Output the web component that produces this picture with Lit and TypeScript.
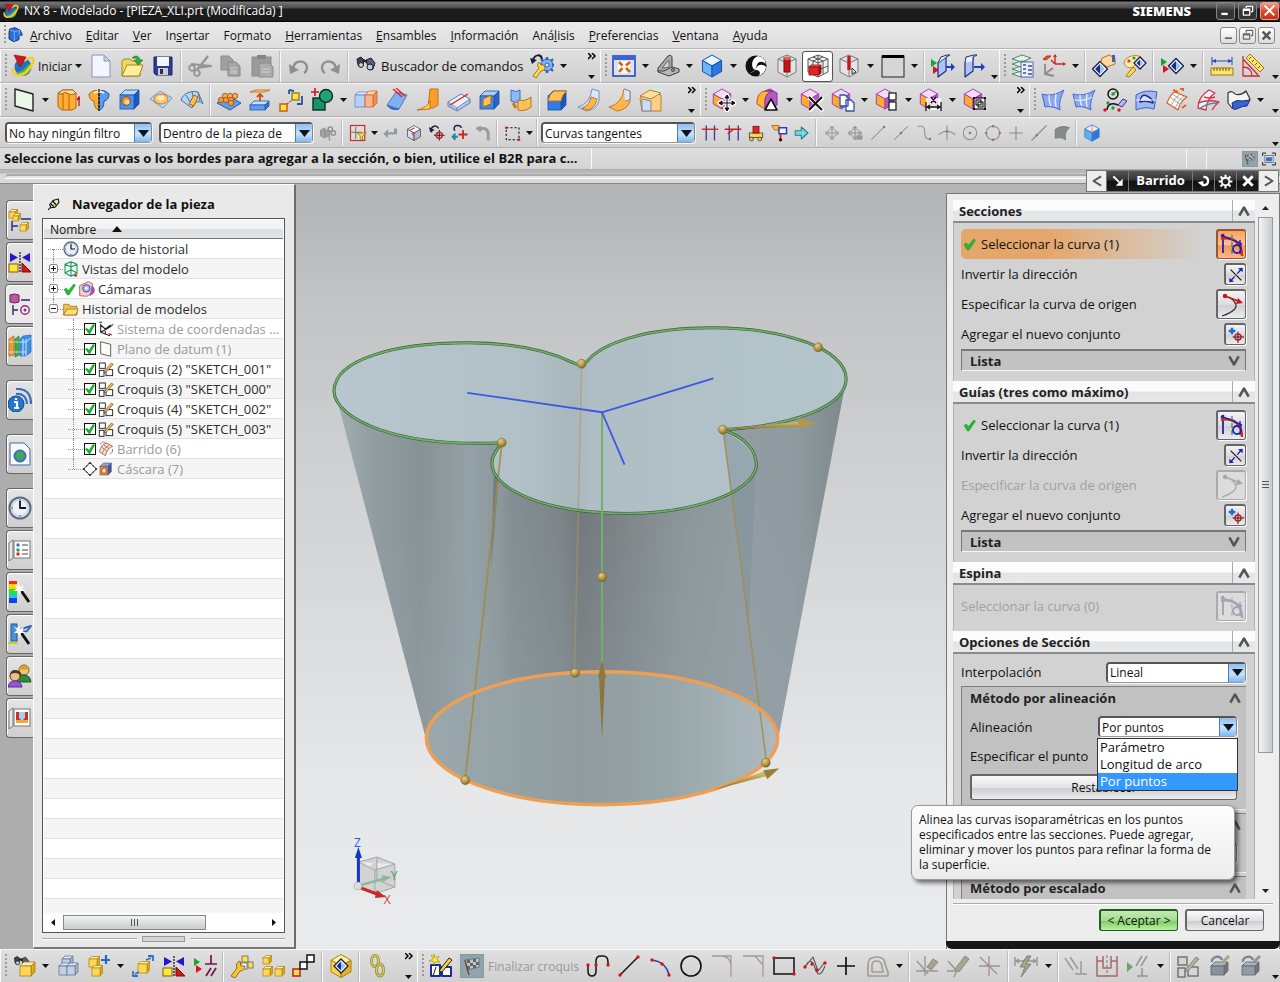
import { LitElement, html, css, svg, nothing } from "lit";
import { customElement, property } from "lit/decorators.js";
import { unsafeSVG } from "lit/directives/unsafe-svg.js";
import { classMap } from "lit/directives/class-map.js";

/* ---------- drawing helpers for the icon set (24 x 24 grid) ---------- */
const p = (d: string, f = "none", s = "none", w = 1) =>
  `<path d="${d}" fill="${f}" stroke="${s}" stroke-width="${w}" stroke-linejoin="round"/>`;
const c = (x: number, y: number, r: number, f = "none", s = "none", w = 1) =>
  `<circle cx="${x}" cy="${y}" r="${r}" fill="${f}" stroke="${s}" stroke-width="${w}"/>`;
const r = (x: number, y: number, w: number, h: number, f = "none", s = "none", k = 1) =>
  `<rect x="${x}" y="${y}" width="${w}" height="${h}" fill="${f}" stroke="${s}" stroke-width="${k}"/>`;
const cube = (x: number, y: number, a: number, top: string, left: string, right: string, st: string, w = 1) => {
  const h = a / 2, k = a * 0.87;
  return p(`M${x} ${y - a}L${x + k} ${y - h}L${x} ${y}L${x - k} ${y - h}Z`, top, st, w) +
    p(`M${x - k} ${y - h}L${x} ${y}V${y + a}L${x - k} ${y + h}Z`, left, st, w) +
    p(`M${x + k} ${y - h}L${x} ${y}V${y + a}L${x + k} ${y + h}Z`, right, st, w);
};
const box = (x: number, y: number, w: number, h: number, d: number, f: string, t: string, s: string, st: string) =>
  p(`M${x} ${y}l${d} ${-d}h${w}l${-d} ${d}Z`, t, st, 0.8) +
  p(`M${x + w} ${y}l${d} ${-d}v${h}l${-d} ${d}Z`, s, st, 0.8) + r(x, y, w, h, f, st, 0.8);
const diamond = (x: number, y: number, a: number) =>
  p(`M${x} ${y - a}L${x + a} ${y}L${x} ${y + a}L${x - a} ${y}Z`, "#fff", "#12205e", 1.4) +
  p(`M${x} ${y - a + 2.5}V${y + a - 2.5}L${x - a + 2.5} ${y}Z`, "#1c2f86") +
  p(`M${x} ${y - a + 2.5}V${y + a - 2.5}L${x + a - 2.5} ${y}Z`, "#9fc3ee");
const tris = (x: number, y: number) =>
  p(`M${x} ${y}l6 4l-6 4Z`, "#1ba234") + p(`M${x + 2} ${y + 7}l6 4l-6 4Z`, "#d81818");
const dots = (col: string, ...pts: number[]) => {
  let o = "";
  for (let i = 0; i < pts.length; i += 2) o += c(pts[i], pts[i + 1], 1.7, col);
  return o;
};
const yb = (x: number, y: number, s = 6) => box(x, y, s, s, 2.5, "#ffd85a", "#fff0b0", "#dba21a", "#b98a18");
const nxc = cube(10, 11, 10, "#f3def6", "#ffac26", "#b256c8", "#a541b4");
const binoc = p("M3 5l4-2l3 3l-1 6a3 3 0 0 1-5-1Z", "#3d4352", "#1c1f28") +
  p("M12 6l5-2l4 5l-2 6a3 3 0 0 1-5-2Z", "#596176", "#1c1f28") + c(7, 11, 2.4, "#cfd9f0", "#222") + c(16, 13, 3, "#b8c7ec", "#222") + p("M9 6l4 2", "none", "#222", 2.5);
const wireCube = p("M12 1l9 4v13l-9 5l-9-5V5ZM3 5l9 4l9-4M12 9v14M12 1v8", "#e4e4e4", "#7a7a7a");
const mirror = p("M2 3l8 4.5L2 12ZM22 3l-8 4.5l8 4.5Z", "#2318c8") + p("M12 2v20", "none", "#111", 1.2).replace("/>", ' stroke-dasharray="2 1"/>') +
  r(1, 14, 9, 8, "#ffe93d", "#8a5800") + p("M14 22V13l9 9Z", "#cf1b12", "#7c0d08");
const flag = r(0, 0, 24, 24, "#8fa4ac", "#7b9199") + p("M5 6l14-2v9l-12 3Z", "#c3c6c6", "#6f7778") +
  p("M7 6h3v3H7ZM13 5h3v3h-3ZM10 9h3v3h-3ZM16 8h3v3h-3ZM7 12h3v3H7ZM13 11h3v3h-3Z", "#5d6668") + p("M5 6l4 15", "none", "#6b4a3e", 1.4);
const surf = p("M1 6C8 8 15 7 23 2C19 10 18 16 19 22C14 19 8 18 4 19Z", "#8da6f2", "#4764cf") +
  p("M8 7c0 5 0 8 2 11M15 6c-1 5-1 9 0 13", "none", "#e6edff", 1.4);
const curveTool = (a: string, b: string, g: string) =>
  p("M3 1v19", "none", a, 1.8) + p("M1 6c8-2 14 0 18 6c2 3 3 7 3 11", "none", b, 2.4) +
  p("M1 2l21 9M20 7v5M4 1l-3 3", "none", a, 1.4) + p("M12 2v21", "none", g, 1.2).replace("/>", ' stroke-dasharray="5 2"/>') +
  c(17, 16, 4, "none", a, 1.8) + p("M21 10l-1 11", "none", a, 1.4);
const sketch = (w: string, k: string, pen: string) => r(2, 3, 9, 8, w, k, 1.4) + r(2, 14, 7, 9, w, k, 1.4) + r(12, 13, 10, 9, w, k, 1.4) +
  p("M10 15L20 3l3 2L13 16l-4 2Z", pen, k, 0.7);
const clock = c(12, 12, 10.5, "#dfeaf8", "#5d6b78", 2) + c(12, 12, 8, "#e9f2fc", "#a9bccc", 0.8) + p("M12 5v7h6", "none", "#111", 1.8) +
  dots("#3c4c60", 12, 4, 12, 20, 4, 12).replace(/r="1.7"/g, 'r=".8"');
const sheet = p("M1 5l4-3v18l-4 3Z", "#e9e9e9", "#777") + r(6, 3, 16, 17, "#fff", "#777");
const wand = p("M12 9l9 13", "none", "#111", 3) + p("M10 3l2 4l4-2l-2 4l4 2l-5 0l-1 4l-2-4l-4 0l3-3l-3-3l4 1Z", "#fff");
const hide = (k: string, y: string) => box(4, 12, 13, 9, 4, k, "#aeb4bb", "#717880", "#5f666d") + p("M5 8C4 2 14 1 15 6", "none", "#7c8792", 2.4) + p("M15 9L22 2", "none", y, 3);
const perSmall = (col: string) => p("M3 12h18M12 3v18M3 12l3-3M3 12l3 3M21 12l-3-3M21 12l-3 3M12 3l-3 3M12 3l3 3M12 21l-3-3M12 21l3-3", "none", col, 1.4) + c(12, 12, 5.5, "none", col, 1.2);

const ICONS: Record<string, string> = {
  nx: `<ellipse cx="12" cy="13" rx="8.5" ry="9" fill="#1d70c4"/>` + p("M6 18c5 0 9-5 13-9c3 5 0 12-6 13c-3 0-5-1-7-4Z", "#4db04a") +
    p("M2 14c-1 9 8 9 14 3c5-5 8-11 5-13c-2-1-6 1-8 3", "none", "#f3cc2e", 2.6) + p("M3 1l12 2l-6 10Z", "#d9141c", "#8c0b10", 0.6),
  part: p("M4 3l8-2l8 4l3 7l-5 1v6l-8 3l-7-4V8Z", "#2a6fdc", "#12357c", 1.4) + p("M4 4l7 3l8-2M11 7v14M19 5l-1 8", "none", "#7fb2f5", 1.4),
  newf: p("M3 1h12l6 6v16H3Z", "#f3f5ff", "#8a90c8") + p("M15 1v6h6Z", "#cdd3f5", "#8a90c8"),
  open: p("M2 22V7l2-2h6l2 2h8v15Z", "#f1d567", "#a88617") + p("M2 22l5-11h16l-4 11Z", "#ffef9e", "#a88617") + p("M12 4c4-4 8-1 8 2h3l-5 5l-4-5h3c0-2-2-2-5-2Z", "#3fa83a", "#22701f", 0.6),
  save: p("M3 3h18v18H5l-2-2Z", "#2d3c96", "#1a2360") + r(6, 3, 12, 9, "#f4f6fb") + r(7, 14, 10, 7, "#c9cdd8") + r(9, 15, 3, 5, "#2a2f48"),
  cut: p("M20 2L9 16M3 10l20 2L9 14", "none", "#949494", 2.2) + c(4, 14, 2.8, "none", "#949494", 1.8) + c(9, 19, 2.8, "none", "#949494", 1.8),
  copy: p("M2 2h8l4 4v10H2Z", "#a0a0a0", "#8a8a8a") + p("M9 8h8l4 4v10H9Z", "#a6a6a6", "#858585") + p("M11 14h7M11 17h7M11 19h7", "none", "#d0d0d0"),
  paste: r(2, 3, 19, 19, "#9a9a9a", "#898989") + r(7, 1, 9, 4, "#858585") + p("M9 9h10l4 4v10H9Z", "#acacac", "#8d8d8d") + p("M12 15h8M12 18h8", "none", "#d8d8d8"),
  undo: p("M6 14C8 5 19 6 20 13c0 3-1 5-3 6", "none", "#8f8f8f", 2.4) + p("M2 10l1 10l9-4Z", "#8f8f8f"),
  redo: p("M18 14C16 5 5 6 4 13c0 3 1 5 3 6", "none", "#8f8f8f", 2.4) + p("M22 10l-1 10l-9-4Z", "#8f8f8f"),
  binoc,
  wrench: c(17, 11, 6, "#7fb0ee", "#2d62b8") + c(17, 11, 2, "#dce9fb", "#2d62b8") + p("M17 3v3M17 16v3M9 11h3M22 11h2M11 5l2 2M21 15l2 2M23 5l-2 2", "none", "#2d62b8", 2.4) +
    p("M3 22l6-8a4 4 0 0 1 0-6l2 3h3l1 3a4 4 0 0 1-4 3l-5 7Z", "#ffd94d", "#a37a0e") + p("M3 6C5 0 11 0 12 5", "none", "#181c3c", 2) + p("M0 4l2 6l5-4Z", "#181c3c"),
  fit: r(1, 2, 22, 20, "#d6e4fb", "#2749b8", 1.6) + r(1, 2, 22, 4, "#3a63d6") + r(6, 7, 12, 12, "#fff") + p("M7 8l3.500 3.500M18 18l-4-4M18 8l-4 3.500M7 18l3.500-4", "none", "#e05d0c", 2.6),
  clip: p("M2 18l11 4l10-4v-3l-10-3l-11 4Z", "#b9b9b9", "#3c3c3c") + p("M2 17V14L12 2q4-2 4 2v9l-8 4Z", "#a9a9a9", "#3c3c3c") + p("M6 14l7-8v7Z", "#dadada", "#666") + c(17, 16, 1.6, "#888", "#444", 0.8),
  bcube: cube(12, 12, 11, "#e6f4ff", "#6cb5ff", "#2a78e4", "#1a4ea8"),
  yin: c(12, 12, 10.5, "#111") + p("M14 2a10 10 0 0 1 8 8c-3-3-8-3-9 1s-3 7-8 8c4 0 6-3 8-6s6-3 9 0a10 10 0 0 1-8 9c4-3 1-6-2-6C7 16 6 5 14 2Z", "#fff"),
  axisA: wireCube + r(9, 4, 6, 14, "#c5161c", "#7c0a0e") + `<ellipse cx="12" cy="4.500" rx="3" ry="1.500" fill="#ee5a5e"/>`,
  axisB: p("M12 1l10 4v13l-10 5l-10-5V5ZM2 5l10 4l10-4M12 9v14M12 1v8M7 3l10 4v13M17 3L7 7v13M2 12l10 4l10-4", "#efefef", "#555") + box(3, 13, 10, 8, 2, "#e02525", "#f06b6b", "#a81010", "#8a0d0d"),
  axisC: wireCube + p("M12 2v14", "none", "#c5161c", 3.4) + p("M15 14l4 4l-4 2Z", "#e6e6e6", "#333"),
  rect: r(1, 2, 22, 21, "#d6d6d6", "#222") + r(1, 1, 22, 3, "#000"),
  slabA: tris(0, 5) + p("M7 9l8-6v14l-8 6Z", "#a9c4f5", "#1d2f7e", 1.2) + p("M7 9l3-6l6-2h3l-4 2", "#e9f0ff", "#1d2f7e") + p("M15 12h5v-3l4 4l-4 4v-3h-5Z", "#1740d0"),
  slabB: p("M3 9l8-6v14l-8 6Z", "#a9c4f5", "#1d2f7e", 1.2) + p("M3 9l1-6l8-2h3l-4 2v4", "#e9f0ff", "#1d2f7e") + p("M12 12h7v-3l4 4l-4 4v-3h-7Z", "#1740d0"),
  layers: p("M1 5l10-4l9 3l-9 4ZM1 10l10-3l8 2l-9 4ZM1 15l10-3l8 2l-9 4ZM1 20l10-3l8 2l-9 4Z", "#e4f3e8", "#4e8c66") + r(10, 8, 12, 15, "#eef0fc", "#5562b8") + p("M12 11h3M12 15h3M12 19h3M17 12h4M17 16h4M17 20h4", "none", "#3749b0", 1.6),
  axes: p("M13 10V1M13 10h10M13 10L9 6", "none", "#d02525", 1.4) + p("M1 5l4-3h4l-5 4Z", "#ea5a28", "#c02a10") + p("M13 0l-2 3h4ZM24 10l-3-2v4Z", "#d02525") + p("M3 10v10l9 2M3 20l8-6", "none", "#8c8c8c", 1.8),
  handD: diamond(8, 15, 7.5) + p("M10 4l7-3l6 3v6l-8 3l-6-5Z", "#ffd99c", "#a9732b") + r(20, 1, 3, 7, "#3c5fc4"),
  palD: p("M1 9C2 2 14-1 19 4c2 4-2 7-7 7c-2 4-9 4-11-2Z", "#ffe9a8", "#b48b2c") + c(6, 7, 1.6, "#d33") + c(11, 4, 1.6, "#2a9d3a") + c(15, 6, 1.6, "#36c") + diamond(17, 9, 6) + p("M3 22l7-9l3 3l-7 7Z", "#ffd94d", "#a37a0e"),
  triD: tris(1, 4) + diamond(16, 12, 7.5),
  ruler: p("M2 7h20M2 3v8M22 3v8", "none", "#2749b8") + p("M2 7l4-2v4ZM22 7l-4-2v4Z", "#2749b8") + r(1, 14, 22, 7, "#ffe36e", "#9d7a10") + p("M4 14v3M7 14v3M10 14v3M13 14v3M16 14v3M19 14v3", "none", "#6f5508"),
  angle: p("M2 2v20h17M2 13c6 0 9 4 9 9M2 5l15 16", "none", "#cb2c2c", 1.3) + p("M5 4l4-4l14 14l-4 4Z", "#ffe36e", "#9d7a10") + p("M10 3l-2 2M13 6l-2 2M16 9l-2 2M19 12l-2 2", "none", "#6f5508"),
  plane: p("M3 1l18 5v17L3 18Z", "#eaf8ec", "#222", 1.4),
  extr: p("M2 5l5-3h10l3 3v15l-4 2H6l-4-3Z", "#ffac35", "#b26208") + p("M2 5c5 3 5-2 9 0s5 2 9 0M7 6v15M13 6v16", "none", "#b26208") + p("M2 5l5-3h10l3 3c-4 2-5 2-9 0s-4 3-9 0Z", "#ffe0a4", "#b26208") + p("M23 18V9l-2 3M23 9l1 3", "none", "#c81414", 1.4),
  revo: p("M2 6q6-6 10-2v18q-5-1-5-9q-5-1-5-7Z", "#ffac35", "#b26208") + p("M22 6q-6-6-10-2v18q5-1 5-9q5-1 5-7Z", "#5b9bf0", "#1f4fa4") + p("M7 5q5-3 10 0", "none", "#fff3c8", 2) + p("M12 1v22", "none", "#111", 1.2).replace("/>", ' stroke-dasharray="3 1"/>'),
  hole: box(2, 7, 14, 14, 5, "#4a93f5", "#b9dcff", "#1e58c4", "#1d4fa8") + c(8, 13, 4.4, "#e8953a", "#8c4d0c") + c(9, 14, 2.5, "#ffd9a0"),
  emboss: p("M1 11l10-8l12 7l-9 10Z", "#c3dbf9", "#6e96cf") + `<ellipse cx="12" cy="11" rx="7" ry="5" fill="#ffc36a" stroke="#c87a1a"/><ellipse cx="12" cy="10" rx="4" ry="2.500" fill="#ffe9b8"/>`,
  dart: p("M1 12C3 5 12 2 18 4l5 12c-4-4-9-3-11 4Z", "#b4d3f7", "#49719f") + p("M6 7l7 12M12 4l3 12M18 4l2 9", "none", "#49719f") + p("M9 16l5-9l4 2l-4 9Z", "#ffbc4e", "#a3660f"),
  pattern: p("M0 15l13 7l11-7l-11-6Z", "#5f9df2", "#2458a8") + [3, 8, 13].map((x) => c(x + 1, 12, 2.7, "#f29a3d", "#9d520b", 0.8) + c(x + 5, 8, 2.7, "#f7ab58", "#9d520b", 0.8)).join("") + c(14, 15, 2.7, "#f29a3d", "#9d520b", 0.8),
  offset: p("M2 4h14l6-2H8Z", "#ffd898", "#c27a18") + p("M12 14V6m-3 3l3-3l3 3", "none", "#d24b0c", 1.8) + box(2, 17, 15, 5, 4, "#5f9df2", "#c4defc", "#2f6fd0", "#2458a8"),
  assoc: r(1, 16, 7, 7, "#ffe14a", "#d4640d", 1.6) + r(13, 5, 7, 7, "#ffe14a", "#8d8410", 1.4) + p("M8 16l5-4", "none", "#c33", 1.2).replace("/>", ' stroke-dasharray="2 1"/>') + p("M10 2l5 1M10 2v4M23 8v8l-5 0", "none", "#2c51a8", 1.8),
  unite: r(3, 10, 12, 12, "#15936a", "#0c2d22", 1.4) + c(16, 8, 6.5, "#22a079", "#0c2d22", 1.4) + p("M5 0v8M1 4h8", "none", "#d01818", 1.6),
  split: box(1, 7, 10, 12, 3, "#b6d3f7", "#dcecfd", "#8fb5ea", "#5c88c8") + box(11, 7, 8, 12, 4, "#f6b488", "#ffd9bc", "#ea8f58", "#d0682c"),
  trimb: p("M2 17L11 4l11 3l-8 14Z", "#7fb0f3", "#4a7ccc") + p("M2 17q4 6 12 4", "#3970cf", "#2d5eb0") + p("M8 1l9 8M11 0l9 8", "none", "#d22", 1.4),
  draft: p("M14 1h8v16l-5 3h-5Z", "#ff9d2c", "#c87010") + p("M1 22q10-2 13-9v8Z", "#ffcf62", "#c87010"),
  facet: p("M1 14l13-8l9 5l-13 9Z", "#e7f1ff", "#5d7ab5") + p("M1 14v4l9 5v-3M23 11v4l-13 8", "#aac4ee", "#5d7ab5") + p("M3 17L21 6", "none", "#d22", 1.4),
  shell: box(2, 8, 14, 13, 5, "#3f88ea", "#a9cffa", "#2766c6", "#1d4fa8") + p("M5 19v-8l8-4v9Z", "#ffc157", "#a3660f"),
  thick: p("M2 2q5 3 9 0v11q-4 3-9 0Z", "#8db9f4", "#3e6db8") + p("M9 12q7 2 13-3v10q-6 5-13 3Z", "#ffc157", "#b3760f") + p("M4 15l3 5", "none", "#d8780e", 3),
  edge: box(2, 8, 13, 14, 5, "#2f7bea", "#b8d8ff", "#1b55bd", "#1d4fa8") + p("M2 13q1-7 6-10h13q-5 3-6 10Z", "#ffc157", "#b3760f"),
  fb1: p("M15 1l7 2v10q-3 9-13 10l-8-4q12-3 14-18Z", "#d8e7fb", "#6e8fc4") + p("M14 9l6 2q-2 9-9 11l-6-2q8-3 9-11Z", "#ffb74a", "#c27a18"),
  fb2: p("M16 1l6 2v10q-3 9-13 10l-8-4q13-3 15-18Z", "#ffb74a", "#c27a18") + p("M16 1l6 2v8q-2 2-5 2", "#d8e7fb", "#6e8fc4"),
  chamfer: r(10, 1, 13, 22, "#bff0fa") + p("M1 10l10-7l11 4v16H3Z", "#ffce86", "#bb7a24") + p("M1 8l10-6l11 3l-10 6Z", "#ffe09b", "#bb7a24") + p("M3 11l9 2v10H3Z", "#cfdcec", "#6f8bb0"),
  mface: nxc + p("M15 8v14M8 15h14M15 7l-2 3h4ZM15 23l-2-3h4ZM7 15l3-2v4ZM23 15l-3-2v4Z", "#fff", "#fff", 3.6) + p("M15 8v14M8 15h14M15 7l-2 3h4ZM15 23l-2-3h4ZM7 15l3-2v4ZM23 15l-3-2v4Z", "#111", "#111", 1),
  offf: p("M1 13Q2 4 9 3l8 0q-7 2-8 9v9l-8-5Z", "#ffb432", "#b3561c") + p("M9 3l5-2l7 4v12l-9 5l-3-1v-9q1-8 8-9Z", "#b25ac6", "#8b2f9c") + p("M9 22l6-11l6 11Z", "#fff", "#111", 1.6),
  delf: nxc + p("M9 9l14 14M23 9L9 23", "none", "#fff", 4) + p("M9 9l13 13M22 9L9 22", "none", "#111", 2),
  copyf: nxc + p("M9 7h5l3 3v8H9ZM15 12h5l3 3v8h-8Z", "#fff", "#2c50b4", 1.3),
  repf: nxc + r(14, 5, 7, 7, "#fff", "#222", 1.3) + r(14, 14, 7, 8, "#fff", "#222", 1.3),
  dimf: nxc + r(7, 10, 15, 12, "#fff").replace("/>", ' opacity=".8"/>') + p("M7 14v9M22 14v9M8 19h13M11 17l-3 2l3 2M18 17l3 2l-3 2M12 9l5 6M17 9l-5 6", "none", "#111", 1.3),
  grpf: nxc + r(11, 10, 11, 11, "#fff", "#111", 1.2) + r(13, 12, 5, 5, "none", "#111", 1.1) + r(15, 14, 5, 5, "none", "#111", 1.1) + p("M10 9h2v2h-2ZM21 9h2v2h-2ZM10 20h2v2h-2ZM21 20h2v2h-2Z", "#111"),
  surf1: surf, surf2: surf + p("M2 12c7 1 13 0 18-3", "none", "#e6edff", 1.2),
  cgrp: c(10, 6, 5, "none", "#111", 1.5) + p("M10 6l4-3", "none", "#2a2", 1.4) + p("M4 22q1-9 11-5", "none", "#111", 1.5) + dots("#1f9b38", 10, 6, 5, 15, 10, 20) + dots("#d11", 2, 22, 16, 22) + p("M15 17l5-6l4 2l-5 6Z", "#b4b8ee", "#3f2b90"),
  surf3: p("M2 7q9-6 21-3l-3 17q-9-3-18 1Z", "#9fb9f5", "#3f5fc8") + p("M6 14q1-9 7-6t6 7q-6-3-13-1Z", "#d9e4ff", "#222b80", 1.4) + p("M2 12h20", "none", "#e6edff"),
  swept: p("M2 15Q6 5 10 4l12 5q-6 3-9 13Z", "#fff8f0", "#d4552a", 1.1) + p("M5 9l11 8M7 6l11 7M6 18q4-9 9-12M10 20q4-9 9-12", "none", "#a9a9a9", 1) + p("M8 2l5 2M17 20l4-3M15 1l3-1v3", "none", "#e0631c", 2),
  studio: p("M2 20Q2 9 13 2l6 3q-8 5-9 17Z", "#eef5ff", "#d34", 1.3) + p("M2 15q10-4 21-1q-4 3-7 8M8 9q6 2 11 0", "none", "#d34", 1.4) + p("M3 21q8-6 18-6", "none", "#48a", 1.3),
  sheetf: p("M1 5q4-3 7 1q6 2 11-3l4 8q-4 7-9 4q-6 0-9 5l-4-5Z", "#f6f6f6", "#333", 1.2) + p("M5 15q5-4 10-2l8-1l-3 6q-5 0-8 2q-3 2-6 1Z", "#3b62d4", "#1c2f80"),
  linkg: p("M2 8l6-3v14l-6-3ZM8 8h6v9H8", "#a0a0a0", "#8a8a8a") + c(15, 7, 3, "none", "#949494", 2) + c(19, 12, 3, "none", "#949494", 2) + p("M14 18v4", "none", "#949494", 2),
  selfil: r(2, 2, 19, 20, "#e6dad8", "#b8343c", 1.6) + p("M9 4v16M3 11h14", "none", "#774", 1.4) + p("M11 12h12l-5 4v6l-3-2v-4Z", "#ffe04c", "#8b6b08"),
  backg: p("M20 6v8H8v5l-6-6l6-6v4h8V6Z", "#8d9c9a"),
  wbox: cube(12, 12, 10, "#fff", "#dcdcee", "#b9b9c8", "#445") + p("M7 8l6-3M9 12l3 4", "none", "#c44", 1.6),
  cross1: p("M5 11C1 3 12 0 14 6", "none", "#1a2248", 2) + p("M1 4l2 7l6-3Z", "#1a2248") + p("M15 8v14M8 15h14", "none", "#111", 1.3) + c(15, 15, 4, "none", "#c22", 2),
  cross2: p("M5 9C1 1 12 0 14 5", "none", "#1a2248", 2) + p("M16 8v12M10 14h12", "none", "#c22", 2.4) + p("M9 17H2l4-4M2 17l4 4", "none", "#1a8ca0", 2.4),
  hookg: p("M3 6h10q6 1 6 8v8M8 3v7", "none", "#9c9c9c", 4),
  dash: p("M3 5h17v16H3Z", "none", "#111", 1.4).replace("/>", ' stroke-dasharray="3 2.500"/>') + dots("#d11", 3, 5, 20, 21),
  hh1: p("M7 2v20M18 2v20", "none", "#443a9c", 1.8) + p("M1 7h22", "none", "#c22", 1.8),
  hh2: p("M7 2v20M19 2v20", "none", "#443a9c", 1.8) + p("M1 7h22M5 13l8-6", "none", "#c22", 1.8),
  lego: r(3, 12, 18, 6, "#ffd54a", "#333") + r(8, 3, 8, 9, "#d92a1c", "#701") + c(6, 20, 2.6, "#e8d04c", "#333") + c(17, 20, 2.6, "#e8d04c", "#333"),
  flow: p("M2 2h10v6H6Z", "#ffbc3c", "#a35b06") + r(12, 5, 10, 8, "#f4f6ff", "#2b3fc4", 2) + p("M14 13v6", "none", "#c22", 2.4) + c(14, 21, 2.2, "#400"),
  arrowc: p("M3 9h8V4l9 8l-9 8v-5H3Z", "#7fd6e0", "#1e7f92", 1.4),
  g1: perSmall("#9a9a9a"), g2: perSmall("#929292") + r(14, 15, 8, 6, "#9a9a9a"),
  g3: p("M3 21L21 3", "none", "#8f8f8f", 1.4) + dots("#8d7676", 20, 4),
  g4: p("M3 21L21 3", "none", "#8f8f8f", 1.4) + dots("#8d7676", 12, 12),
  g5: p("M3 3h6q4 1 4 8t4 9h4", "none", "#8f8f8f", 1.4) + dots("#8d7676", 20, 20),
  g6: p("M12 2v20M1 14q11-9 22 0", "none", "#8f8f8f", 1.4) + dots("#8d7676", 12, 10),
  g7: c(12, 12, 9, "none", "#8f8f8f", 1.4) + dots("#8d7676", 12, 12),
  g8: c(12, 12, 9, "none", "#8f8f8f", 1.4) + dots("#8d7676", 12, 3, 12, 21, 3, 12, 21, 12),
  g9: p("M12 3v18M3 12h18", "none", "#8f8f8f", 1.6),
  g10: p("M2 22L22 2", "none", "#8f8f8f", 1.6) + dots("#8d7676", 9, 15),
  g11: p("M3 7q8-6 19-2q-8 6-5 16q-6-5-14-2Z", "#868b8e", "#6e6e6e"),
  cubecut: cube(12, 12, 11, "#dff2ff", "#56b4f5", "#2c77e8", "#3a78c8") + p("M12 1v14M6 8l6 3l6-3", "none", "#d66"),
  findc: `<g transform="scale(.8)">${binoc}</g>` + box(8, 12, 11, 10, 4, "#ffd65a", "#fff0b0", "#dfa41c", "#ab7d12"),
  cells: box(6, 5, 8, 8, 3, "#c3d0e2", "#e2e9f2", "#a6b8cf", "#5f7797") + box(3, 12, 8, 9, 3, "#c3d0e2", "#e2e9f2", "#a6b8cf", "#5f7797") + box(11, 12, 8, 9, 3, "#c3d0e2", "#e2e9f2", "#a6b8cf", "#5f7797"),
  addc: yb(2, 5, 8) + yb(5, 14, 8) + p("M19 1v9M14 6h9", "none", "#2768c9", 2.2),
  movec: yb(7, 10, 9) + p("M17 2l5 0v5M20 0M15 6l5-2M7 22H2v-5M8 18l-4 2", "none", "#2f6fc2", 1.8),
  mirror,
  consc: tris(1, 4) + p("M18 1v9M12 10h12M13 22l5-8M18 22l5-8", "none", "#7a1346", 1.7),
  wrenchc: r(12, 2, 6, 6, "#ffe14a", "#777") + r(18, 8, 5, 6, "#ffe14a", "#777") + r(11, 9, 6, 6, "#fff", "#777") + p("M1 22l6-8a5 5 0 0 1 3-7l1 5l4 0a5 5 0 0 1-5 5l-5 7Z", "#f5c63a", "#936b0c"),
  three: yb(2, 4, 6) + yb(2, 15, 7) + yb(14, 15, 7),
  chain3: r(1, 15, 7, 7, "#ffe14a", "#c22", 1.6) + r(8, 8, 7, 7, "#fff", "#111", 1.5) + r(15, 1, 7, 7, "#fff", "#111", 1.5),
  boxD: cube(12, 12, 11.5, "#fff1a3", "#ffd246", "#eab21f", "#a9800f") + diamond(12, 12, 7),
  links: `<ellipse cx="9" cy="7" rx="3.500" ry="5.500" fill="none" stroke="#908a30" stroke-width="3"/><ellipse cx="9" cy="7" rx="3.500" ry="5.500" fill="none" stroke="#d6d06a" stroke-width="1.500"/><ellipse cx="14" cy="16" rx="3.500" ry="6" fill="none" stroke="#908a30" stroke-width="3"/><ellipse cx="14" cy="16" rx="3.500" ry="6" fill="none" stroke="#d6d06a" stroke-width="1.500"/>`,
  sk: p("M2 22V11h9v11ZM13 22V13h9v9Z", "#fff", "#1c2c9c", 2) + p("M4 22l3-9M10 17L20 4l3 2L13 18Z", "#ffcf3c", "#222") + p("M5 0l1 4l4-2l-2 4l3 2H6l-1 3l-1-4l-4 0l4-2l-2-4l3 2Z", "#ffe838", "#9b8c0c", 0.6),
  flag,
  k1: p("M2 12v5q0 5 4 5t4-5V7q0-5 5-5h2q5 0 5 6v2", "none", "#111", 1.5) + dots("#d11", 2, 11, 10, 11, 22, 11),
  k2: p("M3 21L21 3", "none", "#111", 1.4) + dots("#d11", 3, 21, 21, 3),
  k3: p("M4 6q14 2 17 15", "none", "#3a3ab8", 1.6) + dots("#d11", 4, 6, 14, 10, 21, 21),
  k4: c(12, 12, 10, "none", "#111", 1.6),
  k5: p("M2 2h10q9 1 9 10v11M12 2h9v8", "none", "#a49a9a", 1.3),
  k6: p("M2 2h12l8 9v12M14 2h8v9", "none", "#a49a9a", 1.3),
  k7: r(2, 4, 20, 16, "none", "#111", 1.5) + dots("#d11", 2, 4, 22, 20),
  k8: p("M2 13q6-12 10 1t10-2M2 13l8-10l5 14l7-9", "none", "#555", 1.1) + dots("#d11", 2, 13, 9, 10, 14, 16, 22, 9),
  k9: p("M12 3v18M3 12h18", "none", "#111", 1.7),
  k10: p("M3 22V10q0-7 9-7q8 0 8 7l3 8v4ZM7 18v-7q0-4 5-4q4 0 5 5l1 6Z", "none", "#a39a9a", 1.6),
  k11: p("M2 7l11 13M10 2v20M1 17h22", "none", "#9b9494", 1.3) + p("M12 13l6-8l5 3l-7 8Z", "#aaa08d", "#888"),
  k12: p("M2 7l8 9M8 23L13 12M1 17h9", "none", "#9b9494", 1.5) + p("M9 15l10-13l4 3L13 18Z", "#aaa68d", "#888"),
  k13: p("M2 12h21M12 2v20M3 3l17 17", "none", "#a08f8f", 1.3),
  k14: p("M1 3v9M23 3v9M2 7h20M5 5l-3 2l3 2M19 5l3 2l-3 2", "none", "#949494", 1.4) + p("M13 2L6 13h5l-4 10l10-13h-5l5-8Z", "#a3a58b", "#7e7e72"),
  k15: p("M1 4l8 12M6 3l8 12M17 7v13M11 20h12", "none", "#9a9a9a", 1.5),
  k16: p("M2 2v20h20V2M8 2v12h8V2M2 7h6M16 7h6", "none", "#a46a6a", 1.5) + p("M12 1v22", "none", "#777").replace("/>", ' stroke-dasharray="3 2"/>'),
  k17: p("M1 8l6 5l-6 5Z", "#6ca06f") + p("M10 12L16 2M15 12l6-10M16 14v8M11 22h11", "none", "#949494", 1.5),
  k18: sketch("#d5d5d5", "#6e6e6e", "#b6b095"), k19: hide("#89919a", "#a6a684"), k20: hide("#949ba6", "#8d96a0"),
  t1: yb(1, 4, 6) + yb(5, 8, 5) + p("M4 13v10M4 18h6M13 11h10", "none", "#1c2c8c", 1.4) + yb(12, 17, 6),
  t2: mirror,
  t3: p("M2 3q4-2 9 0v7q-5 2-9 0Z", "#b95aa0", "#6d2158") + p("M5 13v10M5 18h5M13 8h9", "none", "#2b2b6c", 1.4) + c(17, 18, 4.2, "#fbe9f5", "#8c2c70", 1.4) + c(17, 18, 1.5, "#8c2c70"),
  t4: p("M1 5l5-3v19l-5 1Z", "#f09c2a", "#9d5c0a", 0.6) + p("M7 5l4-3v19l-4 2Z", "#3eb04a", "#1c6c25", 0.6) + p("M12 5l3-3l8-1v17l-5 4h-6Z", "#3a8fe6", "#1c56a2", 0.6) + p("M1 8h5M7 8h4M12 8h6l5-4M1 18h5M7 18h4M12 18h6M15 5v17M18 5v17", "none", "#cfe6ff", 1),
  t5: c(8, 16, 8, "#2276d2", "#154c94") + p("M8 10v2M6 14h3v6M6 20h5", "none", "#fff", 2.2) + p("M8 6q10-1 11 10M8 1q15-1 15 15", "none", "#3d6fb8", 2.2),
  t6: p("M2 1h14l6 6v16H2Z", "#f5f8ff", "#4a66a8") + c(12, 14, 6, "#3b7fc8", "#2b5e9c") + p("M8 12q4-5 7-1t-2 7q-5 0-5-6Z", "#49a64e"),
  t7: clock,
  t8: sheet + dots("#2b78d8", 10, 7) + dots("#2ba238", 10, 12) + dots("#cf2b1c", 10, 16) + p("M14 7h6M14 12h6M14 16h6", "none", "#444"),
  t9: r(1, 1, 8, 4, "#f02c1c") + r(1, 4, 8, 5, "#ffd200") + r(1, 9, 8, 5, "#32e02c") + r(1, 14, 8, 4, "#1cc8e6") + r(1, 18, 8, 5, "#1c3cf0") + wand,
  t10: r(3, 2, 6, 17, "#4c90d8", "#235a9c") + p("M10 8l13-4l-4 5l-8 2M1 21h9", "none", "#3268b8", 2) + p("M0 21h10", "none", "#c8cc2c", 2) + wand,
  t11: c(16, 6, 5, "#f3c27c", "#8c5c1c") + p("M11 5q5-6 10 0q-5 1-10 0Z", "#d8a018") + p("M9 18q1-7 7-7t7 7Z", "#2f8a3a", "#1a5822") + c(7, 12, 5, "#f0bd8c", "#5c4020") + p("M2 12q0-7 6-6t5 6q-2-3-6-3q-4 0-5 3Z", "#4c3a1c") + p("M0 23q1-6 7-6t7 6Z", "#9456d4", "#5c2c98"),
  t12: sheet + r(8, 6, 12, 11, "#d82c1c") + p("M11 6h6v6l-3 3l-3-3Z", "#9cd0f6") + p("M8 17v-3h12v3Z", "#f4a83c"),
  vistas: p("M12 1l9 4v13l-9 5l-9-5V5ZM3 5l9 4l9-4M12 9v14M12 1v22M3 18l9-5l9 5", "none", "#1b9a60", 1.6) + p("M15 22l7-3l-2 5Z", "#d22"),
  camara: p("M1 7l13-6l6 3v13l-8 6l-11-1Z", "#f2d3d4", "#c83c34", 1.2) + c(11, 11, 5.5, "#a9b8e6", "#4a56a4", 1.6) + c(11, 11, 2, "#fff") + p("M19 8q6 2 3 10l-6 4", "#b04ac0", "#7c2b8c"),
  folder: p("M1 5h8l2 3h10v13H1Z", "#f5c445", "#8b6109") + p("M1 21l5-9h17l-4 9Z", "#ffdf7a", "#8b6109"),
  csys: p("M4 4v13l14 5M4 17l9-5L21 7M4 6l7 6v7M11 12l8-6", "none", "#222", 1.6) + p("M2 2h4", "none", "#2b63a8", 2) + p("M16 19l5 2", "none", "#c22", 2) + p("M20 7l3-2", "none", "#2a2", 2),
  datum: p("M4 1l15 4v18L4 19Z", "#fafcfa", "#4c4c4c", 1.3),
  croquis: sketch("#fff", "#222", "#ffb43c"),
  barrido: p("M2 16Q5 5 13 3l9 5q-8 2-11 14Z", "#f3e6e2", "#c8614c", 1.5) + p("M5 9l9 7M9 6l8 6M6 19q3-9 11-13M3 5q4-5 8-3M18 20q5-3 4-8", "none", "#bc7564", 1.5),
  cascara: box(3, 8, 12, 13, 5, "#e38b3c", "#7ea6e8", "#2f5cae", "#5d4a6c") + p("M6 18v-6l6-2v8Z", "#ffe0ae", "#8c4c10"),
  check: p("M2 12l4-3l4 5L20 2l3 2L11 22h-3Z", "#1fbf35", "#0d7c1f", 0.8),
  pin: p("M2 22l5-5", "none", "#111", 2) + p("M5 12l7-8l9-2l1 6l-7 9l-8 1Z", "#efe9a8", "#111", 2) + p("M10 5l7 8M7 11l6 5", "none", "#111", 2.4),
  curve: curveTool("#2322a8", "#dc2a18", "#1f8c68"),
  curveOff: curveTool("#a3a0b8", "#b9a09c", "#a9b5af"),
  invert: p("M4 4l16 16", "none", "#111", 1.6) + p("M14 10l6-7M10 14l-6 7", "none", "#1b22a8", 2) + p("M22 1v7l-7-6ZM2 23v-7l7 6Z", "#1b22a8"),
  origin: p("M9 4q17 11-7 19", "none", "#333", 1.3) + p("M5 3l13 5", "none", "#c4161c", 1.6) + c(5, 3, 2.2, "#c4161c") + p("M23 10l-7 1l2-6Z", "#c4161c"),
  originOff: p("M9 4q17 11-7 19M5 3l13 5", "none", "#b0a8a8", 1.4) + c(5, 3, 2.2, "#b0a3a3") + p("M23 10l-7 1l2-6Z", "#b0a3a3"),
  addset: p("M6 1v10M1 6h10", "none", "#1f68d0", 3.6) + p("M15 7v17M7 15h17", "none", "#111", 1.4) + c(15, 15, 4.6, "none", "#c8161c", 2.2),
  full: p("M1 7V2h6M17 2h6v5M23 17v5h-6M7 22H1v-5", "none", "#444", 2) + r(5, 6, 14, 12, "#dfe9f8", "#333") + r(7, 9, 10, 7, "#2d6fd0"),
  reset: p("M11 5q8 0 8 7t-8 7h-2", "none", "#fff", 4) + p("M1 14l10-2v10Z", "#fff"),
  gear: c(12, 12, 6, "none", "#fff", 3) + p("M12 1v5M12 18v5M1 12h5M18 12h5M4 4l4 4M16 16l4 4M20 4l-4 4M4 20l4-4", "none", "#fff", 3.4) + c(12, 12, 3, "#222"),
  close: p("M4 4l16 16M20 4L4 20", "none", "#fff", 5),
  diag: p("M4 4l10 10", "none", "#fff", 3.4) + p("M20 8v12H8Z", "#fff"),
  left: p("M19 4L6 12l13 8", "none", "#555", 3.4), right: p("M5 4l13 8l-13 8", "none", "#555", 3.4),
  up: p("M4 20L12 6l8 14", "none", "#555", 4.4), down: p("M4 4l8 14l8-14", "none", "#555", 4.4),
  wmin: r(4, 15, 11, 4, "#fff"), wres: p("M9 7V4h11v9h-3M4 9h11v10H4ZM4 11h11", "none", "#fff", 2.2),
  wmin2: r(5, 16, 12, 3, "#666"), wres2: p("M9 8V4h11v9h-3M4 10h11v9H4ZM4 12h11", "none", "#666", 2),
  wx2: p("M5 5l14 14M19 5L5 19", "none", "#555", 4.6), wx: p("M3 3l18 18M21 3L3 21", "none", "#fff", 3.6),
};

const icon = (name: string, size = 24) =>
  html`<svg width=${size} height=${size} viewBox="0 0 24 24" aria-hidden="true">${unsafeSVG(ICONS[name])}</svg>`;

const shared = css`
  * { box-sizing: border-box; }
  :host { font-family: "Open Sans", "Noto Sans", sans-serif; font-size: 13px; color: #111; }
  button { font: inherit; color: inherit; margin: 0; padding: 0; border: 0; background: none; display: flex; align-items: center; justify-content: center; }
  svg { display: block; flex: none; }
`;

/* ---------- toolbar ---------- */
@customElement("nx-toolbar")
class NxToolbar extends LitElement {
  @property() items = "";
  @property() more = "";
  @property({ type: Boolean, reflect: true }) small = false;
  static styles = [shared, css`
    :host { display: flex; align-items: center; min-width: 0; height: 100%; padding-left: 3px; border-left: 1px solid #fafafa; overflow: hidden; }
    :host([small]) { border: 0; }
    .grip { flex: none; width: 4px; height: 24px; background: repeating-linear-gradient(#9a9a9a 0 2px, transparent 2px 4px) 1px 0 / 2px 100% no-repeat; }
    .tool { flex: none; width: 31px; height: 31px; }
    .tool.on { background: #fff; border: 1px solid #555; border-radius: 3px; }
    .dd { flex: none; width: 13px; height: 28px; }
    .sep { flex: none; width: 6px; height: 31px; background: linear-gradient(90deg, #bdbdbd 50%, #fafafa 50%) 2px 0 / 2px 100% no-repeat; }
    .wide { flex: none; display: flex; gap: 3px; font-size: 12px; padding: 0 3px; white-space: nowrap; }
    .find { font-size: 13px; }
    .off { color: #989898; gap: 4px; padding: 0 4px; }
    .more { flex: none; margin-left: auto; width: 17px; height: 26px; flex-direction: column; justify-content: space-between; }
    .slim { width: 10px; }
    :host([small]) .tool { width: 23px; height: 23px; }
    :host([small]) .dd { width: 10px; }
    :host([small]) .sep { width: 7px; height: 27px; }
  `];
  render() {
    const tri = html`<svg width="7" height="4" viewBox="0 0 7 4"><path d="M0 0h7L3.500 4Z" fill="#111" /></svg>`;
    return html`
      ${this.small ? nothing : html`<span class="grip"></span>`}
      ${this.items.split(" ").map((it) => {
        if (it === "|") return html`<span class="sep"></span>`;
        if (it === "v") return html`<button class="dd" aria-label="Más opciones">${tri}</button>`;
        if (it === "@iniciar") return html`<button class="wide">${icon("nx")}<span>Iniciar</span>${tri}</button>`;
        if (it === "@buscador") return html`<button class="wide find">${icon("binoc")}<span>Buscador de comandos</span></button>`;
        if (it === "@fin") return html`<button class="wide off">${icon("flag")}<span>Finalizar croquis</span></button>`;
        const on = it.startsWith("*");
        const name = on ? it.slice(1) : it;
        return html`<button class=${classMap({ tool: true, on })} aria-label=${name}>${icon(name, this.small ? 18 : 24)}</button>`;
      })}
      ${this.more
        ? html`<button class=${classMap({ more: true, slim: this.more === "1" })} aria-label="Opciones de barra">
            ${this.more === "2"
              ? html`<svg width="8" height="7" viewBox="0 0 8 7"><path d="M0 0l3 3l-3 3M4 0l3 3l-3 3" fill="none" stroke="#000" stroke-width="1.500" /></svg>`
              : html`<span></span>`}
            ${tri}
          </button>`
        : nothing}
    `;
  }
}

/* ---------- drop-down ---------- */
@customElement("nx-combo")
class NxCombo extends LitElement {
  @property() value = "";
  @property() label = "";
  @property({ attribute: false }) choices: string[] = [];
  static styles = [shared, css`
    :host { display: block; position: relative; min-width: 0; }
    .frame { display: grid; grid-template-columns: minmax(0, 1fr) 17px; height: 21px; border: 2px solid #666; border-color: #555 #888 #999 #555; border-width: 2px 1px 1px 2px; border-radius: 4px; background: #fff; overflow: hidden; box-shadow: 1px 1px 0 #f5f5f5; }
    select { grid-area: 1 / 1 / 2 / 3; appearance: none; min-width: 0; width: 100%; border: 0; margin: 0; padding: 0 17px 0 2px; background: #fff; color: #111; font: inherit; font-size: 12px; line-height: 17px; }
    .arrow { grid-area: 1 / 2; pointer-events: none; display: grid; place-items: center; background: linear-gradient(#8fc0f2, #c5e2fb 55%, #7fb8f0); border-left: 1px solid #4d7db8; }
  `];
  render() {
    return html`<div class="frame">
      <select aria-label=${this.label}>
        ${(this.choices.length ? this.choices : [this.value]).map((o) => html`<option ?selected=${o === this.value}>${o}</option>`)}
      </select>
      <span class="arrow"><svg width="11" height="7" viewBox="0 0 11 7"><path d="M0 0h11L5.500 7Z" fill="#10131c" /></svg></span>
    </div>`;
  }
}

/* ---------- part navigator ---------- */
interface Node { text: string; icon: string; depth: number; box?: "+" | "-"; tick?: boolean; check?: boolean; off?: boolean; last?: boolean }
const NODES: Node[] = [
  { text: "Modo de historial", icon: "t7", depth: 0 },
  { text: "Vistas del modelo", icon: "vistas", depth: 0, box: "+" },
  { text: "Cámaras", icon: "camara", depth: 0, box: "+", tick: true },
  { text: "Historial de modelos", icon: "folder", depth: 0, box: "-" },
  { text: "Sistema de coordenadas de datum (0)", icon: "csys", depth: 1, check: true, off: true },
  { text: "Plano de datum (1)", icon: "datum", depth: 1, check: true, off: true },
  { text: 'Croquis (2) "SKETCH_001"', icon: "croquis", depth: 1, check: true },
  { text: 'Croquis (3) "SKETCH_000"', icon: "croquis", depth: 1, check: true },
  { text: 'Croquis (4) "SKETCH_002"', icon: "croquis", depth: 1, check: true },
  { text: 'Croquis (5) "SKETCH_003"', icon: "croquis", depth: 1, check: true },
  { text: "Barrido (6)", icon: "barrido", depth: 1, check: true, off: true },
  { text: "Cáscara (7)", icon: "cascara", depth: 1, check: false, off: true, last: true },
];

@customElement("nx-navigator")
class NxNavigator extends LitElement {
  static styles = [shared, css`
    :host { display: flex; flex-direction: column; background: #e9e9e9; border: 1px solid #fff; border-right: 2px solid #6b6b6b; border-bottom: 2px solid #777; padding: 5px 9px 6px 8px; min-height: 0; }
    h2 { display: flex; align-items: center; gap: 12px; margin: 0; height: 28px; padding-left: 5px; font-size: 13px; }
    .tree { flex: 1; min-height: 0; display: flex; flex-direction: column; border: 1px solid #555; background: #fff; padding: 1px; }
    .head { display: flex; align-items: center; gap: 16px; height: 19px; padding-left: 6px; font-size: 12px; background: linear-gradient(#f4f4f4 45%, #dcdddf 55%, #e2e3e5); border-bottom: 1px solid #777; }
    ul { flex: 1; margin: 0; padding: 0; list-style: none; min-height: 0; overflow: hidden; background: repeating-linear-gradient(#fff 0 19px, #e1e1e1 19px 20px, #f5f5f5 20px 39px, #e1e1e1 39px 40px); }
    li { display: flex; align-items: center; height: 20px; padding-left: 4px; font-size: 13px; color: #2c2c2c; white-space: nowrap; }
    li.off { color: #9a9a9a; }
    .guide { position: relative; flex: none; width: 15px; height: 20px; background: linear-gradient(90deg, #999 50%, transparent 50%) 6px 10px / 2px 1px repeat-x; }
    .guide::before { content: ""; position: absolute; left: 5px; top: 0; height: 20px; border-left: 1px dotted #888; }
    .guide.first::before { top: 10px; height: 10px; }
    .guide.last::before { height: 10px; }
    .indent { flex: none; width: 20px; }
    .box { position: absolute; left: 1px; top: 5px; width: 9px; height: 9px; border: 1px solid #888; border-radius: 2px; background: #fff; color: #111; }
    .box::before { content: ""; position: absolute; left: 1px; top: 3px; width: 5px; height: 1px; background: #111; }
    .plus::after { content: ""; position: absolute; left: 3px; top: 1px; width: 1px; height: 5px; background: #111; }
    li > svg { margin-right: 3px; }
    input { appearance: none; flex: none; width: 12px; height: 12px; margin: 0 2px 0 1px; border: 1px solid #111; background: #fff; }
    input:checked { background: #fff url('data:image/svg+xml,<svg xmlns="http://www.w3.org/2000/svg" viewBox="0 0 10 10"><path d="M0 5l2-1l2 2l4-6l2 1l-5 9h-1Z" fill="%2314b52a"/></svg>') center / 10px 10px no-repeat; }
    input:not(:checked) { border: 1px dashed #111; transform: rotate(45deg); width: 10px; height: 10px; margin: 0 3px 0 2px; }
    .t { overflow: hidden; text-overflow: ellipsis; }
    .scroll { display: flex; align-items: center; gap: 8px; height: 18px; padding: 0 7px; background: #fff; }
    .thumb { width: 143px; height: 15px; border: 1px solid #888; background: linear-gradient(#f3f3f3, #c9cacf); display: grid; place-items: center; }
    .scroll > svg:last-child { margin-left: auto; }
    .split { display: flex; align-items: center; gap: 5px; height: 12px; margin-bottom: -4px; }
    .split i { flex: 1; height: 2px; border-top: 1px solid #aaa; background: #fff; }
    .split b { width: 43px; height: 6px; border: 1px solid #999; background: #d6d6d6; }
  `];
  render() {
    return html`
      <h2>${icon("pin", 13)}<span>Navegador de la pieza</span></h2>
      <div class="tree">
        <div class="head"><span>Nombre</span><svg width="10" height="6" viewBox="0 0 10 6"><path d="M0 6h10L5 0Z" fill="#111" /></svg></div>
        <ul>
          ${NODES.map((n, i) => html`<li class=${classMap({ off: !!n.off })}>
            ${n.depth ? html`<span class="indent"></span>` : nothing}
            <span class=${classMap({ guide: true, first: i === 0, last: !!n.last || i === 3 })}>
              ${n.box ? html`<span class=${classMap({ box: true, plus: n.box === "+" })}></span>` : nothing}
            </span>
            ${n.tick ? icon("check", 13) : nothing}
            ${n.check !== undefined ? html`<input type="checkbox" aria-label=${n.text} .checked=${n.check} />` : nothing}
            ${icon(n.icon, 16)}<span class="t">${n.text}</span>
          </li>`)}
        </ul>
        <div class="scroll">
          <svg width="4" height="7" viewBox="0 0 4 7"><path d="M4 0v7L0 3.500Z" fill="#111" /></svg>
          <div class="thumb"><svg width="9" height="7" viewBox="0 0 9 7"><path d="M1.500 0v7M4.500 0v7M7.500 0v7" stroke="#555" /></svg></div>
          <svg width="4" height="7" viewBox="0 0 4 7"><path d="M0 0v7L4 3.500Z" fill="#111" /></svg>
        </div>
      </div>
      <div class="split"><i></i><b></b><i></i></div>
    `;
  }
}

/* ---------- 3D view ---------- */
const RIM = "M586 361C602 341 648 327 712 327C786 327 846 349 846 378C846 405 795 425 722 429C745 436 757 451 756 466A132.500 50 0 1 1 495 451L501 442C400 447 334 420 333 390C334 358 395 342 466 342C515 342 548 350 573 362Q580 366 586 361Z";
const BODY = "M336 398L425 738A176 67 0 0 0 778 738L845 384L722 420L501 436Z";
@customElement("nx-view")
class NxView extends LitElement {
  static styles = [shared, css`
    :host { display: block; min-width: 0; min-height: 0; }
    svg { width: 100%; height: 100%; }
  `];
  render() {
    const ball = (x: number, y: number) => svg`<circle cx=${x} cy=${y} r="4.500" fill="url(#ball)" stroke="#7b652a" stroke-width=".5"/>`;
    return html`<svg viewBox="295 184 651 764" preserveAspectRatio="xMidYMid meet" role="img" aria-label="Modelo de barrido">
      <defs>
        <linearGradient id="skin" gradientUnits="userSpaceOnUse" x1="337" y1="500" x2="845" y2="500">
          <stop offset="0" stop-color="#a0adb1" /><stop offset=".07" stop-color="#929da1" /><stop offset=".16" stop-color="#879295" />
          <stop offset=".26" stop-color="#94a1a6" /><stop offset=".32" stop-color="#8c979b" /><stop offset=".34" stop-color="#858f93" />
          <stop offset=".44" stop-color="#7c8488" /><stop offset=".48" stop-color="#73797d" /><stop offset=".55" stop-color="#7c8387" />
          <stop offset=".68" stop-color="#8c969a" /><stop offset=".8" stop-color="#919da2" /><stop offset=".9" stop-color="#8f9ba0" /><stop offset="1" stop-color="#7f898c" />
        </linearGradient>
        <linearGradient id="fade" x1="0" y1="0" x2="0" y2="1"><stop offset=".3" stop-color="#9aa7ac" stop-opacity="0" /><stop offset="1" stop-color="#9aa7ac" stop-opacity=".45" /></linearGradient>
        <linearGradient id="base"><stop offset="0" stop-color="#9aa8ad" /><stop offset=".45" stop-color="#909c9f" /><stop offset=".7" stop-color="#99a6aa" /><stop offset="1" stop-color="#adbabf" /></linearGradient>
        <linearGradient id="topf"><stop offset="0" stop-color="#b7c7cd" /><stop offset=".38" stop-color="#b0c0c6" /><stop offset=".47" stop-color="#a9b7bc" /><stop offset=".5" stop-color="#aebec4" /><stop offset="1" stop-color="#b4c5cb" /></linearGradient>
        <radialGradient id="ball" cx=".38" cy=".3" r=".8"><stop offset="0" stop-color="#e8cf85" /><stop offset=".5" stop-color="#b7984a" /><stop offset="1" stop-color="#6d5823" /></radialGradient>
        <linearGradient id="gold" x1="0" y1="0" x2="0" y2="1"><stop offset="0" stop-color="#dcc070" /><stop offset="1" stop-color="#85702e" /></linearGradient>
      </defs>
      <path d=${BODY} fill="url(#skin)" />
      <path d=${BODY} fill="url(#fade)" />
      <path d="M501 444L493 477L490 570Z" fill="#727d81" />
      <path d=${RIM} fill="url(#topf)" />
      <path d="M723 431Q757 446 755.500 470L748.500 628Z" fill="#82929a" opacity=".55" />
      <ellipse cx="601.500" cy="738" rx="176" ry="66.500" fill="url(#base)" />
      <path d="M581 366L574 670" stroke="#ad9760" stroke-width="1.500" opacity=".55" />
      <path d="M501 444L464.500 778" fill="none" stroke="#a18943" stroke-width="1.600" opacity=".9" />
      <path d="M723 431L740 560L766 760" fill="none" stroke="#a18d52" stroke-width="1.500" opacity=".9" />
      <path d=${RIM} fill="none" stroke="#3b5d3c" stroke-width="3" /><path d=${RIM} fill="none" stroke="#6fae66" stroke-width="1.700" />
      <ellipse cx="601.500" cy="738" rx="176" ry="66.500" fill="none" stroke="#ef9f55" stroke-width="3.500" />
      <path d="M601.500 412V672" stroke="#6eb16a" stroke-width="2" />
      <path d="M466.500 392L601.500 411.500L713 377.500M601.500 411.500L624 464" fill="none" stroke="#3b57e4" stroke-width="1.800" />
      <path d="M601.500 739L598.500 676L604.500 676Z" fill="#8b7638" /><path d="M601.500 660L597.500 677Q601.500 683 605.500 677Z" fill="#8f793a" />
      <path d="M722 429L798 421L799 426Z" fill="url(#gold)" /><path d="M798 417L816 422.500L799 428Z" fill="#b3974b" />
      <path d="M712 790L764 771L766 776Z" fill="url(#gold)" /><path d="M763 770L779 768L767 779Z" fill="#99803a" />
      ${[[581, 363], [818, 346.500], [722.500, 429], [501, 442], [601.500, 576.500], [574.500, 672.500], [464.500, 780], [765.500, 762.500]].map((q) => ball(q[0], q[1]))}
      <g>
        <path d="M358 862L376 857L394 864V887L374 894L358 886ZM358 862L374 870L394 864M374 870V894M376 857V880L358 886M376 880L394 887" fill="#d2d3d5" stroke="#a5a5a8" />
        <path d="M360 885L382 879" stroke="#92b89c" stroke-width="2.500" /><path d="M381 875L391 877L382 882Z" fill="#92b89c" />
        <path d="M357.500 884V856" stroke="#1136c4" stroke-width="3" /><path d="M354 858L357.500 847L361 858Z" fill="#1136c4" />
        <path d="M360 888L376 894" stroke="#c62a2a" stroke-width="3" /><path d="M374 898L376 890L385 897Z" fill="#c62a2a" />
        <circle cx="357" cy="886" r="4" fill="#dcdcdc" stroke="#999" stroke-width=".5" />
        <g font-family="Open Sans, sans-serif" font-size="12"><text x="353" y="847" fill="#2a5ae0">Z</text><text x="390" y="880" fill="#3ca050">Y</text><text x="383" y="904" fill="#d63a3a">X</text></g>
      </g>
    </svg>`;
  }
}

/* ---------- sweep dialog ---------- */
@customElement("nx-dialog")
class NxDialog extends LitElement {
  static styles = [shared, css`
    :host { position: relative; display: flex; flex-direction: column; min-height: 0; margin-top: 9px; border: 1px solid #777; border-bottom: 0; background: #ededed; }
    .title { position: absolute; right: 0; top: -24px; display: flex; height: 22px; gap: 1px; background: #777; border: 1px solid #777; }
    .title button, .title strong { width: 21px; height: 20px; background: linear-gradient(#555, #333 45%, #111 50%, #1c1c1c); color: #fff; }
    .title strong { width: 63px; text-align: center; font-size: 13px; line-height: 18px; }
    .title .edge { width: 19px; background: #eee; }
    .body { flex: 1; min-height: 0; display: grid; grid-template-columns: minmax(0, 1fr) 16px; gap: 2px; padding: 6px 6px 0; }
    .panes { overflow: hidden; min-height: 0; }
    .bar { display: flex; justify-content: space-between; align-items: center; height: 23px; padding-left: 6px; font-size: 13px; font-weight: 700; color: #222; background: linear-gradient(#fcfcfc 45%, #e2e4e5 55%, #e6e8e9); border-bottom: 2px solid #8a8a8a; }
    .bar button { width: 23px; height: 21px; border-left: 1px solid #aaa; }
    .sec { background: #d2d2d2; border: 2px solid #b2b2b2; border-width: 0 1px 0 1px; padding: 6px 8px 10px 7px; }
    .row { display: flex; align-items: center; justify-content: space-between; height: 30px; font-size: 13px; color: #111; }
    .row.off { color: #a0a0a0; }
    .row.hot { border-radius: 5px; background: linear-gradient(90deg, #e5a66a 30%, #d2d2d2 85%); }
    .lab { display: flex; align-items: center; gap: 5px; }
    .lab svg { margin-left: 2px; }
    .big, .mini { flex: none; width: 30px; height: 30px; border: 1px solid #666; border-width: 2px 1px 1px 2px; border-radius: 3px; background: linear-gradient(#f4f4f6, #dcdce0 50%, #cfcfd3 51%, #ececee); box-shadow: 1px 1px 0 #fafafa; }
    .mini { width: 22px; height: 22px; }
    .hot .big { background: linear-gradient(#fba263, #fcc295 50%, #f8955a 55%, #fbb98d); border-color: #94582f; }
    .off .big { border-color: #aaa; background: #dcdcdc; }
    .list { display: flex; justify-content: space-between; align-items: center; width: 100%; height: 22px; padding: 0 4px 0 8px; font-size: 13px; font-weight: 700; color: #222; background: #c2c2c2; border: 1px solid #777; border-width: 2px 1px 1px 1px; border-bottom-color: #f4f4f4; }
    .opt { padding-bottom: 0; }
    .interp { height: 24px; margin-bottom: 2px; }
    .interp nx-combo { width: 140px; }
    .sub { background: #c1c1c1; border: 1px solid #808080; border-right: 0; border-bottom: 1px solid #eee; margin-bottom: 3px; padding: 0 9px 9px 8px; height: 124px; }
    .sub h4 { display: flex; justify-content: space-between; align-items: center; margin: 0 -5px 3px 0; height: 22px; font-size: 13px; color: #222; }
    .sub .row { height: 29px; }
    .sub nx-combo { width: 139px; }
    .sub.mid { height: 60px; }
    .drop { position: relative; }
    .menu { position: absolute; z-index: 2; left: -1px; right: -1px; top: 22px; margin: 0; padding: 0; list-style: none; background: #fff; border: 1px solid #333; font-size: 13px; line-height: 17px; }
    .menu li { padding-left: 2px; }
    .menu .cur { background: #3399ff; color: #fff; }
    .wide { width: 100%; height: 26px; margin-top: 4px; font-size: 12px; }
    .push { border: 1px solid #666; border-width: 2px 1px 1px 2px; border-radius: 3px; background: linear-gradient(#fafafa, #e3e3e6 50%, #cdcdd1 52%, #ececee); }
    .vs { display: flex; flex-direction: column; align-items: center; background: #efefef; padding: 6px 0; gap: 7px; }
    .vs div { flex: none; width: 15px; height: 538px; max-height: 78%; border: 1px solid #999; background: linear-gradient(90deg, #f4f4f6, #c9cad0); display: grid; place-items: center; }
    .vs > svg:last-child { margin-top: auto; }
    .foot { display: flex; justify-content: flex-end; gap: 7px; margin: 4px 6px 0; padding: 5px 9px 10px 0; border-top: 1px solid #aaa; box-shadow: inset 0 1px 0 #fff; }
    .foot .push { width: 79px; height: 22px; font-size: 12px; }
    .foot .ok { border-color: #225c22; background: linear-gradient(#c4eab4, #a2dc90 50%, #7ccb64 52%, #b9f29e); }
    .black { height: 8px; margin: 0 -1px; background: #161616; border-radius: 0 0 6px 6px; }
    .tip { position: absolute; z-index: 3; left: -36px; top: 611px; width: 324px; height: 75px; padding: 6px 16px 6px 7px; border: 1px solid #999; border-radius: 7px; background: linear-gradient(#fdfdfd, #ececec); box-shadow: 3px 3px 4px #0008; font-size: 12px; line-height: 15px; color: #111; }
  `];
  private head(t: string) {
    return html`<div class="bar"><span>${t}</span><button aria-label="Contraer ${t}">${icon("up", 14)}</button></div>`;
  }
  private row(text: string, ic: string, opts: { big?: boolean; tick?: boolean; hot?: boolean; off?: boolean } = {}) {
    return html`<div class=${classMap({ row: true, hot: !!opts.hot, off: !!opts.off })}>
      <span class="lab">${opts.tick ? icon("check", 13) : nothing}<span>${text}</span></span>
      <button class=${opts.big ? "big" : "mini"} aria-label=${text} ?disabled=${opts.off}>${icon(ic, opts.big ? 24 : 16)}</button>
    </div>`;
  }
  private set(hot: boolean) {
    return html`<div class="sec">
      ${this.row("Seleccionar la curva (1)", "curve", { big: true, tick: true, hot })}
      ${this.row("Invertir la dirección", "invert")}
      ${this.row("Especificar la curva de origen", hot ? "origin" : "originOff", { big: true, off: !hot })}
      ${this.row("Agregar el nuevo conjunto", "addset")}
      <button class="list"><span>Lista</span>${icon("down", 14)}</button>
    </div>`;
  }
  render() {
    const modes = ["Parámetro", "Longitud de arco", "Por puntos"];
    return html`
      <div class="title">
        <button class="edge" aria-label="Anterior">${icon("left", 14)}</button><button aria-label="Acoplar">${icon("diag", 14)}</button>
        <strong>Barrido</strong>
        <button aria-label="Restablecer">${icon("reset", 14)}</button><button aria-label="Opciones">${icon("gear", 15)}</button>
        <button aria-label="Cerrar">${icon("close", 14)}</button><button class="edge" aria-label="Siguiente">${icon("right", 14)}</button>
      </div>
      <div class="body">
        <div class="panes">
          ${this.head("Secciones")}${this.set(true)}
          ${this.head("Guías (tres como máximo)")}${this.set(false)}
          ${this.head("Espina")}
          <div class="sec">${this.row("Seleccionar la curva (0)", "curveOff", { big: true, off: true })}</div>
          ${this.head("Opciones de Sección")}
          <div class="sec opt">
            <div class="row interp"><span>Interpolación</span><nx-combo label="Interpolación" value="Lineal"></nx-combo></div>
            <div class="sub">
              <h4><span>Método por alineación</span>${icon("up", 14)}</h4>
              <div class="row"><span>Alineación</span>
                <div class="drop">
                  <nx-combo label="Alineación" value="Por puntos" .choices=${modes}></nx-combo>
                  <ul class="menu" role="listbox" aria-label="Alineación">
                    ${modes.map((m) => html`<li role="option" aria-selected=${m === "Por puntos"} class=${classMap({ cur: m === "Por puntos" })}>${m}</li>`)}
                  </ul>
                </div>
              </div>
              <div class="row"><span>Especificar el punto</span></div>
              <button class="push wide">Restablecer</button>
            </div>
            <div class="sub mid">
              <h4><span></span>${icon("up", 14)}</h4>
              <div class="row"><span></span><nx-combo label="Orientación"></nx-combo></div>
            </div>
            <div class="sub"><h4><span>Método por escalado</span>${icon("up", 14)}</h4></div>
          </div>
        </div>
        <div class="vs">
          <svg width="7" height="4" viewBox="0 0 7 4"><path d="M0 4h7L3.500 0Z" fill="#222" /></svg>
          <div><svg width="7" height="9" viewBox="0 0 7 9"><path d="M0 1.500h7M0 4.500h7M0 7.500h7" stroke="#555" /></svg></div>
          <svg width="7" height="4" viewBox="0 0 7 4"><path d="M0 0h7L3.500 4Z" fill="#222" /></svg>
        </div>
      </div>
      <div class="foot"><button class="push ok">&lt; Aceptar &gt;</button><button class="push">Cancelar</button></div>
      <div class="black"></div>
      <div class="tip" role="tooltip">Alinea las curvas isoparamétricas en los puntos especificados entre las secciones. Puede agregar, eliminar y mover los puntos para refinar la forma de la superficie.</div>
    `;
  }
}

/* ---------- application frame ---------- */
const MENU: [string, string, string][] = [
  ["", "A", "rchivo"], ["", "E", "ditar"], ["", "V", "er"], ["In", "s", "ertar"], ["Fo", "r", "mato"], ["", "H", "erramientas"],
  ["", "E", "nsambles"], ["", "I", "nformación"], ["Aná", "l", "isis"], ["", "P", "referencias"], ["", "V", "entana"], ["", "A", "yuda"],
];
const TABS = [["t1", "t2", "*t3", "t4"], ["t5"], ["t6"], ["t7", "t8", "t9", "t10", "t11", "t12"]];

@customElement("app-root")
class AppRoot extends LitElement {
  static styles = [shared, css`
    :host { display: flex; flex-direction: column; height: 100vh; min-height: 800px; background: #d9d9d9; }
    .title { flex: none; display: flex; align-items: center; gap: 5px; height: 22px; padding: 0 1px 0 3px; color: #fff; font-size: 12px; background: linear-gradient(#000 0 1px, #777 2px, #4c4c4c 8px, #1b1b1b 9px); border-bottom: 1px solid #000; }
    .title h1 { margin: 0; font-size: 12px; font-weight: 400; }
    .brand { margin-left: auto; padding-right: 20px; font-family: "Noto Sans", sans-serif; font-weight: 900; font-size: 13px; }
    .win { display: flex; gap: 3px; }
    .win button { width: 19px; height: 18px; border: 1px solid #888; border-radius: 3px; background: linear-gradient(#777, #333 50%); }
    .win .x { background: linear-gradient(#f0a08c, #e04c2c 50%, #c43414); border-color: #e99; }
    .menu { flex: none; display: flex; align-items: center; height: 27px; padding: 0 5px 0 4px; gap: 14px; font-size: 12px; background: linear-gradient(#e9e9e9, #dedede); border-bottom: 1px solid #b5b5b5; }
    .menu > svg { margin-right: -7px; }
    .grip { width: 2px; height: 20px; margin-right: -13px; background: repeating-linear-gradient(#9a9a9a 0 2px, transparent 2px 4px); }
    .menu .win { margin-left: auto; gap: 2px; }
    .menu .win button { width: 17px; height: 17px; background: linear-gradient(#fff, #ddd); }
    .bar { flex: none; display: grid; height: 34px; background: linear-gradient(#e0e0e0, #d0d0d0); border-top: 1px solid #f7f7f7; border-bottom: 1px solid #b0b0b0; }
    .b1 { grid-template-columns: 600fr 399fr 281fr; }
    .b2 { grid-template-columns: 700fr 329fr 251fr; }
    .b4 { grid-template-columns: 417fr 863fr; border-bottom: 0; height: 33px; }
    .b3 { display: flex; align-items: center; height: 31px; padding-left: 5px; }
    .b3 .s1 { width: 147px; } .b3 .s2 { width: 154px; margin-left: 7px; } .b3 .s3 { width: 154px; }
    .b3 nx-toolbar:last-child { flex: 1; }
    .status { flex: none; display: flex; height: 22px; background: linear-gradient(#dedede, #d4d4d4); border-bottom: 1px solid #aaa; font-size: 13px; font-weight: 700; }
    .status p { flex: 0 1 592px; margin: 0; padding-left: 4px; line-height: 20px; white-space: nowrap; overflow: hidden; border-right: 1px solid #fafafa; }
    .status .cells { margin-left: auto; display: flex; align-items: center; gap: 4px; padding-right: 4px; }
    .status i { width: 16px; height: 20px; border-left: 1px solid #f5f5f5; }
    .status i:nth-child(2) { width: 32px; }
    .dock { flex: none; height: 13px; padding: 4px 0 0 5px; background: linear-gradient(#b7b7b7 0 3px, #d9d9d9 4px); }
    .dock div { height: 5px; border-top: 2px solid #aaa; border-bottom: 1px solid #fff; background: #e4e4e4; border-radius: 4px 0 0 0; }
    main { flex: 1; min-height: 0; display: grid; grid-template-columns: 33px 263px minmax(0, 1fr) 334px; background: linear-gradient(#b2b3b5, #c3c4c6 16%, #d6d7d9 50%, #e6e8ea 80%, #e8eaeb); border-top: 1px solid #888; }
    .tabs { display: flex; flex-direction: column; gap: 14px; padding: 16px 0 0 6px; background: #adadad; }
    .tabs div { display: flex; flex-direction: column; gap: 2px; }
    .tabs button { height: 40px; border: 1px solid #666; border-right: 0; border-radius: 4px 0 0 4px; background: linear-gradient(#e4e4e4, #cfcfcf); box-shadow: inset 1px 1px 0 #fff; }
    .tabs .on { background: #e9e9e9; margin-left: -1px; }
  `];
  render() {
    const win = (a: string, b: string, x: string) => html`<div class="win">
      <button aria-label="Minimizar">${icon(a, 14)}</button><button aria-label="Restaurar">${icon(b, 14)}</button><button class=${x === "wx" ? "x" : ""} aria-label="Cerrar">${icon(x, 13)}</button></div>`;
    return html`
      <header class="title">${icon("nx", 16)}<h1>NX 8 - Modelado - [PIEZA_XLI.prt (Modificada) ]</h1><span class="brand">SIEMENS</span>${win("wmin", "wres", "wx")}</header>
      <nav class="menu"><span class="grip"></span>${icon("part", 16)}
        ${MENU.map(([a, u, b]) => html`<button><span>${a}<u>${u}</u>${b}</span></button>`)}
        ${win("wmin2", "wres2", "wx2")}
      </nav>
      <div class="bar b1">
        <nx-toolbar items="@iniciar newf open save | cut copy paste | undo redo | @buscador wrench v" more="2"></nx-toolbar>
        <nx-toolbar items="fit v clip v bcube v yin axisA *axisB axisC v rect v | slabA slabB" more="1"></nx-toolbar>
        <nx-toolbar items="layers axes v | handD palD | triD v | ruler angle" more="1"></nx-toolbar>
      </div>
      <div class="bar b2">
        <nx-toolbar items="plane v extr revo hole emboss dart | pattern offset assoc unite v split trimb draft facet shell thick | edge fb1 fb2 chamfer" more="2"></nx-toolbar>
        <nx-toolbar items="mface v offf v delf copyf v repf v dimf v grpf" more="2"></nx-toolbar>
        <nx-toolbar items="surf1 surf2 cgrp surf3 swept studio sheetf v" more="1"></nx-toolbar>
      </div>
      <div class="bar b3">
        <nx-combo class="s1" label="Filtro de tipo" value="No hay ningún filtro"></nx-combo>
        <nx-combo class="s2" label="Alcance de selección" value="Dentro de la pieza de"></nx-combo>
        <nx-toolbar small items="linkg | selfil v backg wbox cross1 cross2 hookg | dash v |"></nx-toolbar>
        <nx-combo class="s3" label="Regla de curva" value="Curvas tangentes"></nx-combo>
        <nx-toolbar small items="hh1 hh2 lego flow arrowc | g1 g2 g3 g4 g5 g6 g7 g8 g9 g10 g11 | cubecut" more="1"></nx-toolbar>
      </div>
      <div class="status"><p>Seleccione las curvas o los bordes para agregar a la sección, o bien, utilice el B2R para c...</p>
        <span class="cells"><i></i><i></i>${icon("flag", 16)}${icon("full", 14)}</span></div>
      <div class="dock"><div></div></div>
      <main>
        <div class="tabs">${TABS.map((g) => html`<div>${g.map((t) => html`<button class=${t[0] === "*" ? "on" : ""} aria-label="Recurso">${icon(t.replace("*", ""))}</button>`)}</div>`)}</div>
        <nx-navigator></nx-navigator>
        <nx-view></nx-view>
        <nx-dialog></nx-dialog>
      </main>
      <div class="bar b4">
        <nx-toolbar items="findc v cells addc v movec mirror consc | wrenchc three chain3 | boxD | links" more="2"></nx-toolbar>
        <nx-toolbar items="sk @fin k1 k2 k3 k4 k5 k6 k7 k8 k9 k10 v | k11 k12 k13 | k14 v | k15 k16 k17 v | k18 k19 k20" more="1"></nx-toolbar>
      </div>
    `;
  }
}
